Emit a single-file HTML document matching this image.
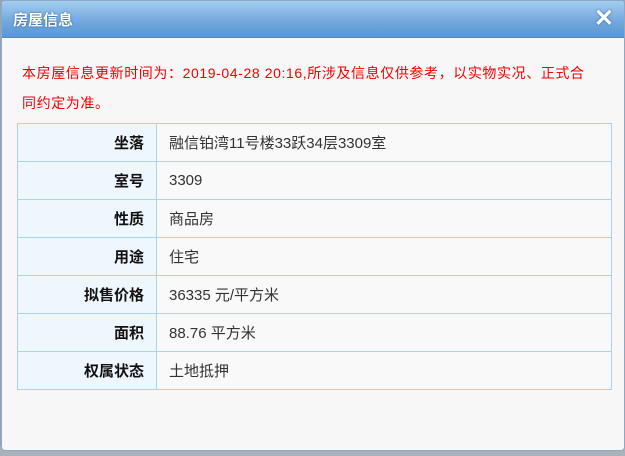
<!DOCTYPE html>
<html><head><meta charset="utf-8"><style>
*{margin:0;padding:0;box-sizing:border-box}
body{width:625px;height:456px;background:#9aa3ad;position:relative;overflow:hidden;font-family:"Liberation Sans","Noto Sans CJK SC",sans-serif}
.strip{position:absolute;left:0;right:0;bottom:0;height:10px;background:#a9b1ba}
.dlg{position:absolute;left:1px;top:0;width:624px;height:451px;background:#f7f7f7;border:1px solid #8aa8c8;border-radius:4px;overflow:hidden}
.tb{height:37px;background:linear-gradient(#a5cdef,#6fa6dd 60%,#5b97d6);border-bottom:1px solid #4f87c7;position:relative}
.tt{position:absolute;left:11px;top:8px;color:#fff;font-size:15px;font-weight:bold;text-shadow:0 0 2px #2a5c94}
.x{position:absolute;right:10px;top:3px;color:#fff;font-size:24px;font-weight:bold;text-shadow:0 0 2px #2a5c94}
.msg{position:absolute;left:20px;top:57px;color:#f20000;font-size:14px;line-height:30px;white-space:nowrap;letter-spacing:0.6px}
table{position:absolute;left:15px;top:122px;width:595px;border-collapse:collapse}
td{border:1px solid #a8d3f4;height:38px;font-size:15px;color:#333}
td.l{width:139px;background:#eef6fe;text-align:right;padding-right:12px;font-weight:bold;color:#111}
td.v{background:#f9f9f9;padding-left:12px}
</style></head><body>
<div class="strip"></div>
<div class="dlg">
<div class="tb"><div class="tt">房屋信息</div><div class="x">✕</div></div>
<div class="msg">本房屋信息更新时间为：2019-04-28 20:16,所涉及信息仅供参考，以实物实况、正式合<br>同约定为准。</div>
<table>
<tr><td class="l">坐落</td><td class="v">融信铂湾11号楼33跃34层3309室</td></tr>
<tr><td class="l">室号</td><td class="v">3309</td></tr>
<tr><td class="l">性质</td><td class="v">商品房</td></tr>
<tr><td class="l">用途</td><td class="v">住宅</td></tr>
<tr><td class="l">拟售价格</td><td class="v">36335 元/平方米</td></tr>
<tr><td class="l">面积</td><td class="v">88.76 平方米</td></tr>
<tr><td class="l">权属状态</td><td class="v">土地抵押</td></tr>
</table>
</div>
</body></html>
